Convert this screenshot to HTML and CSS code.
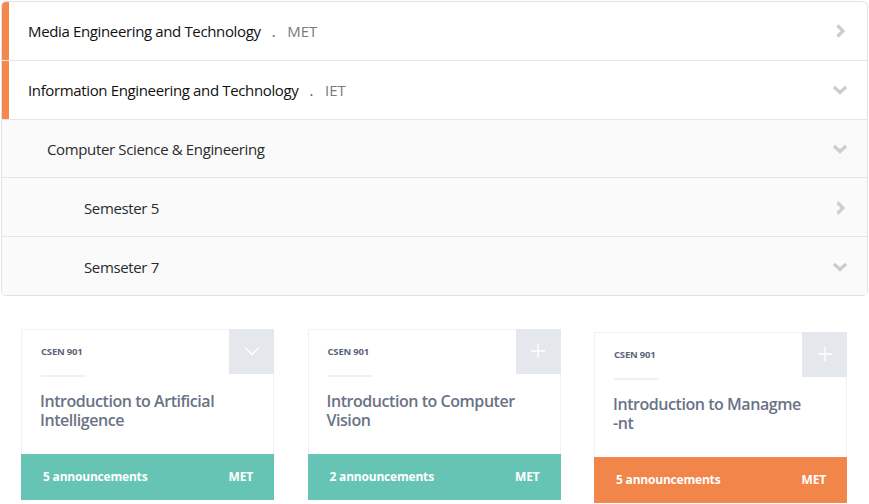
FILE: index.html
```html
<!DOCTYPE html>
<html>
<head>
<meta charset="utf-8">
<link rel="stylesheet" href="styles.css">
</head>
<body>
<div class="tree">
  <div class="row row-faculty">
    <span class="row-label">Media Engineering and Technology</span>
    <span class="row-sep">.</span>
    <span class="row-code">MET</span>
    <svg class="chev" width="14" height="14" viewBox="0 0 14 14"><polyline points="4.5,1.5 10,7 4.5,12.5"/></svg>
  </div>
  <div class="row row-faculty">
    <span class="row-label">Information Engineering and Technology</span>
    <span class="row-sep">.</span>
    <span class="row-code">IET</span>
    <svg class="chev" width="14" height="14" viewBox="0 0 14 14"><polyline points="1,4 7,9.5 13,4"/></svg>
  </div>
  <div class="row row-sub row-dept">
    <span class="row-label">Computer Science &amp; Engineering</span>
    <svg class="chev" width="14" height="14" viewBox="0 0 14 14"><polyline points="1,4 7,9.5 13,4"/></svg>
  </div>
  <div class="row row-sub row-sem">
    <span class="row-label">Semester 5</span>
    <svg class="chev" width="14" height="14" viewBox="0 0 14 14"><polyline points="4.5,1.5 10,7 4.5,12.5"/></svg>
  </div>
  <div class="row row-sub row-sem">
    <span class="row-label">Semseter 7</span>
    <svg class="chev" width="14" height="14" viewBox="0 0 14 14"><polyline points="1,4 7,9.5 13,4"/></svg>
  </div>
</div>

<div class="cards">
  <div class="card">
    <div class="card-head">
      <span class="card-code">CSEN 901</span>
      <div class="card-toggle">
        <svg width="20" height="20" viewBox="0 0 20 20"><polyline points="3,6.5 10,13.5 17,6.5"/></svg>
      </div>
    </div>
    <div class="card-rule"></div>
    <div class="card-title">Introduction to Artificial Intelligence</div>
    <div class="card-foot teal">
      <span>5 announcements</span>
      <span>MET</span>
    </div>
  </div>
  <div class="card">
    <div class="card-head">
      <span class="card-code">CSEN 901</span>
      <div class="card-toggle">
        <svg width="20" height="20" viewBox="0 0 20 20"><path d="M10 3V17M3 10H17"/></svg>
      </div>
    </div>
    <div class="card-rule"></div>
    <div class="card-title">Introduction to Computer Vision</div>
    <div class="card-foot teal">
      <span>2 announcements</span>
      <span>MET</span>
    </div>
  </div>
  <div class="card card-low">
    <div class="card-head">
      <span class="card-code">CSEN 901</span>
      <div class="card-toggle">
        <svg width="20" height="20" viewBox="0 0 20 20"><path d="M10 3V17M3 10H17"/></svg>
      </div>
    </div>
    <div class="card-rule"></div>
    <div class="card-title title-pre">Introduction to Managme
-nt</div>
    <div class="card-foot orange">
      <span>5 announcements</span>
      <span>MET</span>
    </div>
  </div>
</div>
</body>
</html>
```

FILE: styles.css
```css
html, body {
  margin: 0;
  padding: 0;
  background: #ffffff;
}

body {
  font-family: "Open Sans", "Noto Sans", sans-serif;
  width: 869px;
  height: 504px;
  overflow: hidden;
}

.tree {
  margin: 1px 1px 0 1px;
  border: 1px solid #e3e3e3;
  border-radius: 5px;
  overflow: hidden;
  background: #fff;
}

.row {
  height: 56.8px;
  display: flex;
  align-items: center;
  border-bottom: 1px solid #e6e6e6;
  padding: 1px 20px 0 0;
  box-sizing: content-box;
  font-size: 15px;
  letter-spacing: -0.36px;
}

.row:last-child {
  border-bottom: none;
}

.row-faculty {
  padding-left: 26px;
  box-shadow: inset 7px 0 0 #f4874b;
  color: #111;
}

.row-sub {
  background: #fafafa;
  color: #2b2b2b;
}

.row-dept {
  padding-left: 45px;
}

.row-sem {
  padding-left: 82px;
}

.row-label {
  flex: none;
}

.row-sep {
  margin-left: 11px;
  color: #555;
}

.row-code {
  margin-left: 12px;
  color: #7a7a7a;
  letter-spacing: 0;
}

.chev {
  margin-left: auto;
  fill: none;
  stroke: #cdcdcd;
  stroke-width: 3.2;
}

.cards {
  display: flex;
  align-items: flex-start;
  gap: 33.5px;
  padding: 33px 0 0 21px;
}

.card {
  width: 253px;
  height: 171px;
  box-sizing: border-box;
  border: 1px solid #f2f2f2;
  display: flex;
  flex-direction: column;
  background: #fff;
}

.card-low {
  margin-top: 3px;
}

.card-head {
  display: flex;
  align-items: center;
  justify-content: space-between;
  height: 45px;
  margin-top: -1px;
  margin-right: -1px;
}

.card-code {
  margin-left: 19px;
  font-size: 9.5px;
  font-weight: 700;
  color: #5b6478;
  letter-spacing: -0.2px;
}

.card-toggle {
  width: 45px;
  height: 45px;
  background: #e4e8ec;
  display: flex;
  align-items: center;
  justify-content: center;
}

.card-toggle svg {
  fill: none;
  stroke: #ffffff;
  stroke-width: 1.3;
}

.card-rule {
  margin: 1px 0 0 19px;
  width: 45px;
  height: 2px;
  background: #f1f1f1;
}

.card-title {
  margin: 15px 12px 0 18px;
  font-size: 16px;
  line-height: 19px;
  font-weight: 600;
  color: #6a7386;
  letter-spacing: -0.45px;
}

.title-pre {
  white-space: pre-line;
}

.card-foot {
  margin: auto -1px -1px -1px;
  height: 46px;
  display: flex;
  align-items: center;
  justify-content: space-between;
  padding: 0 21px 0 22px;
  color: #fff;
  font-size: 12px;
  font-weight: 700;
  letter-spacing: -0.2px;
}

.teal {
  background: #66c4b4;
}

.orange {
  background: #f2854a;
}
```
